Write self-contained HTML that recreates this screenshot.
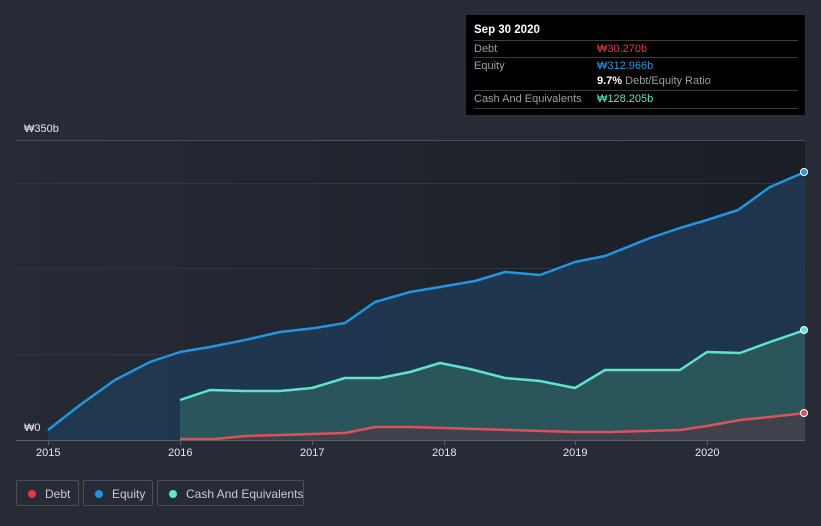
<!DOCTYPE html>
<html><head><meta charset="utf-8"><style>
body{margin:0;width:821px;height:526px;background:#262b36;font-family:"Liberation Sans",sans-serif;overflow:hidden;position:relative}
.tt{position:absolute;left:466px;top:15px;width:339px;height:100px;background:#000;}
.tt .h{position:absolute;left:8px;top:9px;color:#fff;font-weight:bold;font-size:11.5px}
.row{position:absolute;left:8px;width:324px;border-top:1px solid #3a3d44;height:16px;font-size:11px;color:#9aa0a8;line-height:16px;white-space:nowrap}
.row span{position:absolute;left:123px}
.leg{position:absolute;top:480px;height:26px;border:1px solid #4a4f59;border-radius:2px;color:#c8ccd2;font-size:12px;line-height:26px;box-sizing:border-box;white-space:nowrap}
.leg i{position:absolute;left:11px;top:9px;width:8px;height:8px;border-radius:50%}
.leg b{font-weight:normal;position:absolute;left:28px}
.ax{position:absolute;color:#e6e8eb;font-size:11px}
</style></head><body>
<svg width="821" height="526" style="position:absolute;left:0;top:0">
<defs><linearGradient id="bg" x1="0" x2="1"><stop offset="0" stop-color="#252a35"/><stop offset="1" stop-color="#1a1e25"/></linearGradient></defs>
<rect x="16" y="140" width="789" height="300" fill="url(#bg)"/>
<line x1="16" y1="140.5" x2="805" y2="140.5" stroke="#4a4e57"/>
<line x1="16" y1="183.5" x2="805" y2="183.5" stroke="#30353e"/>
<line x1="16" y1="268.5" x2="805" y2="268.5" stroke="#30353e"/>
<line x1="16" y1="354.5" x2="805" y2="354.5" stroke="#30353e"/>
<path d="M48,430 L80,405 L115,380 L150,362 L180,352 L210,347 L245,340 L280,332 L315,328 L345,323 L375,302 L410,292 L440,287 L475,281 L505,272 L540,275 L575,262 L605,256 L650,238 L680,228 L707,220 L738,210 L770,187 L805,172 L805,440 L48,440Z" fill="#1f3a55" fill-opacity="0.85"/>
<path d="M180,400 L210,390 L245,391 L280,391 L312,388 L345,378 L380,378 L410,372 L440,363 L470,369 L505,378 L540,381 L575,388 L605,370 L640,370 L680,370 L707,352 L740,353 L770,342 L805,330 L805,440 L180,440Z" fill="#2c5a5e" fill-opacity="0.85"/>
<path d="M180,439 L215,439 L245,436 L280,435 L312,434 L345,433 L375,427 L410,427 L444,428 L510,430 L575,432 L610,432 L680,430 L707,426 L740,420 L770,417 L805,413 L805,440 L180,440Z" fill="#4a3a44" fill-opacity="0.7"/>
<path d="M48,430 L80,405 L115,380 L150,362 L180,352 L210,347 L245,340 L280,332 L315,328 L345,323 L375,302 L410,292 L440,287 L475,281 L505,272 L540,275 L575,262 L605,256 L650,238 L680,228 L707,220 L738,210 L770,187 L805,172" fill="none" stroke="#2394e0" stroke-width="2.5" stroke-linejoin="round"/>
<path d="M180,400 L210,390 L245,391 L280,391 L312,388 L345,378 L380,378 L410,372 L440,363 L470,369 L505,378 L540,381 L575,388 L605,370 L640,370 L680,370 L707,352 L740,353 L770,342 L805,330" fill="none" stroke="#5fe3cc" stroke-width="2.5" stroke-linejoin="round"/>
<path d="M180,439 L215,439 L245,436 L280,435 L312,434 L345,433 L375,427 L410,427 L444,428 L510,430 L575,432 L610,432 L680,430 L707,426 L740,420 L770,417 L805,413" fill="none" stroke="#d9535a" stroke-width="2.5" stroke-linejoin="round"/>
<line x1="16" y1="440.5" x2="805" y2="440.5" stroke="#5a5e66"/>
<g stroke="#5a5e66"><line x1="48.5" y1="440" x2="48.5" y2="445"/><line x1="180.5" y1="440" x2="180.5" y2="445"/><line x1="312.5" y1="440" x2="312.5" y2="445"/><line x1="444.5" y1="440" x2="444.5" y2="445"/><line x1="575.5" y1="440" x2="575.5" y2="445"/><line x1="707.5" y1="440" x2="707.5" y2="445"/></g>
<circle cx="804" cy="172" r="3.5" fill="#2394e0" stroke="#fff"/>
<circle cx="804" cy="330" r="3.5" fill="#5fe3cc" stroke="#fff"/>
<circle cx="804" cy="413" r="3.5" fill="#d9535a" stroke="#fff"/>
</svg>
<div class="ax" style="left:24px;top:123px">₩350b</div>
<div class="ax" style="left:24px;top:422px">₩0</div>
<div class="ax" style="left:36px;top:447px">2015</div>
<div class="ax" style="left:168px;top:447px">2016</div>
<div class="ax" style="left:300px;top:447px">2017</div>
<div class="ax" style="left:432px;top:447px">2018</div>
<div class="ax" style="left:563px;top:447px">2019</div>
<div class="ax" style="left:695px;top:447px">2020</div>
<div class="tt"><div class="h">Sep 30 2020</div>
<div class="row" style="top:25px">Debt<span style="color:#e5393f">₩30.270b</span></div>
<div class="row" style="top:42px">Equity<span style="color:#2394e0">₩312.966b</span></div>
<div class="row" style="top:58px;border-top:none"><span><b style="color:#fff">9.7%</b> Debt/Equity Ratio</span></div>
<div class="row" style="top:75px;height:17px;border-bottom:1px solid #3a3d44">Cash And Equivalents<span style="color:#5fe3cc">₩128.205b</span></div>
</div>
<div class="leg" style="left:16px;width:63px"><i style="background:#e5393f"></i><b>Debt</b></div>
<div class="leg" style="left:83px;width:70px"><i style="background:#2394e0"></i><b>Equity</b></div>
<div class="leg" style="left:157px;width:147px"><i style="background:#5fe3cc"></i><b>Cash And Equivalents</b></div>
</body></html>
